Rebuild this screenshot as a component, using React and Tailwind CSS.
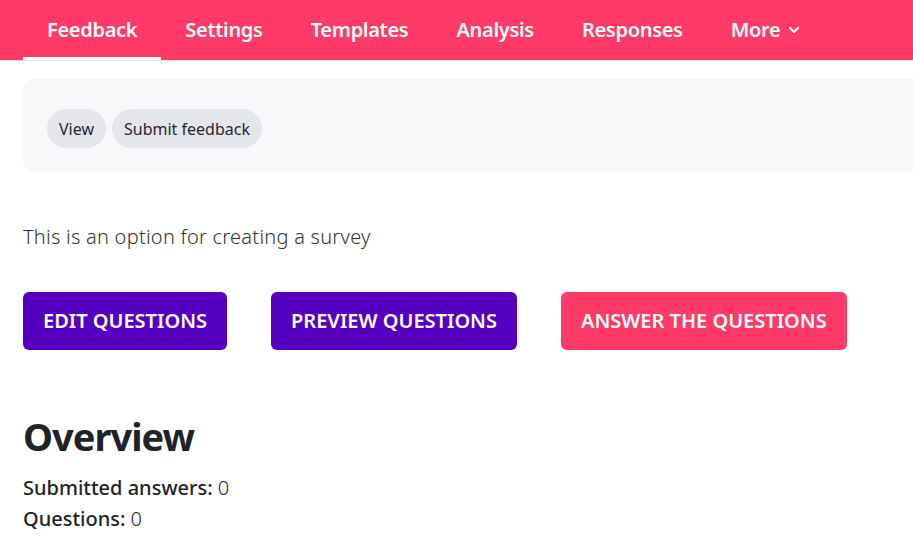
import React from 'react';
import { ChevronDown } from 'lucide-react';

const TABS = ['Feedback', 'Settings', 'Templates', 'Analysis', 'Responses'];

function NavBar() {
  return (
    <nav className="flex h-[61px] items-stretch border-b border-[#e3e3e3] bg-[#ff3a66] pl-[23px]">
      {TABS.map((t, i) => (
        <a
          key={t}
          className={
            'flex items-center px-6 pb-[1px] text-[20px] font-semibold tracking-[-0.3px] text-white ' +
            (i === 0 ? 'border-b-[3px] border-white pt-[3px]' : '')
          }
        >
          {t}
        </a>
      ))}
      <a className="flex items-center gap-1.5 px-6 pb-[1px] text-[20px] font-semibold tracking-[-0.3px] text-white">
        More
        <ChevronDown size={16} strokeWidth={3.5} />
      </a>
    </nav>
  );
}

export default function App() {
  return (
    <div className="h-[559px] w-[913px] overflow-hidden bg-white font-['Noto_Sans',sans-serif]">
      <NavBar />
      <main className="pl-[23px]">
        {/* actions card */}
        <div className="mt-[18px] flex h-[93px] w-[1000px] items-start gap-[6px] rounded-[10px] bg-[#f7f8fa] px-6 pt-[30px]">
          <span className="flex h-[39px] items-center rounded-full bg-[#e4e6eb] px-3 text-[16px] text-[#2a2433]">View</span>
          <span className="flex h-[39px] items-center rounded-full bg-[#e4e6eb] px-3 text-[16px] text-[#2a2433]">Submit feedback</span>
        </div>

        <p className="mt-[50px] text-[20px] font-light tracking-[0.25px] text-[#333]">This is an option for creating a survey</p>

        <div className="mt-[40px] flex gap-[44px]">
          <button className="h-[58px] rounded-[6px] bg-[#5500c0] px-5 text-[20px] font-semibold text-white">
            EDIT QUESTIONS
          </button>
          <button className="h-[58px] rounded-[6px] bg-[#5500c0] px-5 text-[20px] font-semibold text-white">
            PREVIEW QUESTIONS
          </button>
          <button className="h-[58px] rounded-[6px] bg-[#ff3a66] px-5 text-[20px] font-semibold text-white">
            ANSWER THE QUESTIONS
          </button>
        </div>

        <h2 className="mt-[62px] text-[38px] font-bold leading-[48px] tracking-[-1px] text-[#1f2328]">Overview</h2>
        <div className="mt-[12px] text-[20px] leading-[31px] text-[#1f2328]">
          <div>
            <span className="font-medium">Submitted answers:</span> <span className="font-light">0</span>
          </div>
          <div>
            <span className="font-medium">Questions:</span> <span className="font-light">0</span>
          </div>
        </div>
      </main>
    </div>
  );
}
